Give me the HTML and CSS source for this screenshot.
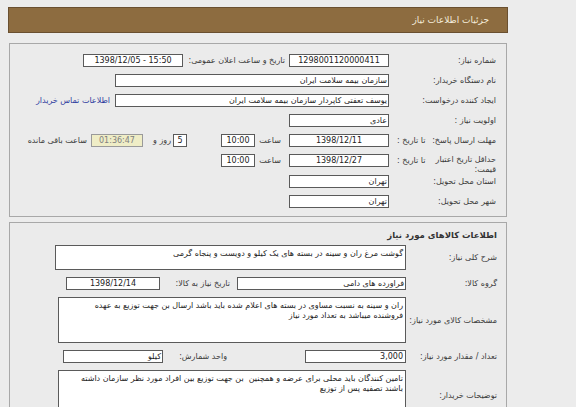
FILE: index.html
```html
<!DOCTYPE html>
<html lang="fa" dir="rtl">
<head>
<meta charset="utf-8">
<title>جزئیات اطلاعات نیاز</title>
<link rel="stylesheet" href="styles.css">
</head>
<body>
<div class="page">
  <div class="header"><span class="title">جزئیات اطلاعات نیاز</span></div>

  <div class="panel p1">
    <div class="row">
      <div class="lbl">شماره نیاز:</div>
      <div class="box w100 ctr" dir="ltr">1298001120000411</div>
      <div class="lbl2 w106">تاریخ و ساعت اعلان عمومی:</div>
      <div class="box w100 ctr" dir="ltr">1398/12/05 - 15:50</div>
    </div>
    <div class="row">
      <div class="lbl">نام دستگاه خریدار:</div>
      <div class="box w274">سازمان بیمه سلامت ایران</div>
    </div>
    <div class="row">
      <div class="lbl">ایجاد کننده درخواست:</div>
      <div class="box w274">یوسف تعفتی کاپردار سازمان بیمه سلامت ایران</div>
      <a class="link" href="#">اطلاعات تماس خریدار</a>
    </div>
    <div class="row">
      <div class="lbl">اولویت نیاز :</div>
      <div class="box w100">عادی</div>
    </div>
    <div class="row">
      <div class="lbl split"><span>مهلت ارسال پاسخ:</span><span>تا تاریخ :</span></div>
      <div class="box w100 ctr" dir="ltr">1398/12/11</div>
      <div class="lbl2 w34 pr8">ساعت</div>
      <div class="box w34 ctr" dir="ltr">10:00</div>
      <div class="gap34"></div>
      <div class="box w14 ctr" dir="ltr">5</div>
      <div class="lbl2 w30 pr2">روز و</div>
      <div class="box w52 ctr remain" dir="ltr">01:36:47</div>
      <div class="lbl2 pr4">ساعت باقی مانده</div>
    </div>
    <div class="row r6">
      <div class="lbl split"><span class="two">حداقل تاریخ اعتبار<br>قیمت:</span><span class="sub">تا تاریخ :</span></div>
      <div class="box w100 ctr" dir="ltr">1398/12/27</div>
      <div class="lbl2 w34 pr8">ساعت</div>
      <div class="box w34 ctr" dir="ltr">10:00</div>
    </div>
    <div class="row">
      <div class="lbl">استان محل تحویل:</div>
      <div class="box w100">تهران</div>
    </div>
    <div class="row">
      <div class="lbl">شهر محل تحویل:</div>
      <div class="box w100">تهران</div>
    </div>
  </div>

  <div class="panel p2">
    <div class="ptitle">اطلاعات کالاهای مورد نیاز</div>
    <div class="rows">
      <div class="row2">
        <div class="lbl l2">شرح کلی نیاز:</div>
        <div class="area w351 h25">گوشت مرغ ران و سینه در بسته های یک کیلو و دویست و پنجاه گرمی</div>
      </div>
      <div class="row2">
        <div class="lbl l2">گروه کالا:</div>
        <div class="box w169">فراورده های دامی</div>
        <div class="lbl2 w77 pr7">تاریخ نیاز به کالا:</div>
        <div class="box w94 ctr" dir="ltr">1398/12/14</div>
      </div>
      <div class="row2">
        <div class="lbl l2">مشخصات کالای مورد نیاز:</div>
        <div class="area w348 h46">ران و سینه به نسبت مساوی در بسته های اعلام شده باید باشد ارسال بن جهت توزیع به عهده<br>فروشنده میباشد به تعداد مورد نیاز</div>
      </div>
      <div class="row2">
        <div class="lbl l2">تعداد / مقدار مورد نیاز:</div>
        <div class="box w101 num" dir="ltr">3,000</div>
        <div class="lbl2 w142 pr78">واحد شمارش:</div>
        <div class="box w100">کیلو</div>
      </div>
      <div class="row2">
        <div class="lbl l2">توضیحات خریدار:</div>
        <div class="area w348 h50">تامین کنندگان باید محلی برای عرضه و همچنین&nbsp; بن جهت توزیع بین افراد مورد نظر سازمان داشته<br>باشند تصفیه پس از توزیع</div>
      </div>
    </div>
  </div>
</div>
</body>
</html>
```

FILE: styles.css
```css
html, body {
  margin: 0;
  padding: 0;
}
body {
  background: #ececec;
  font-family: "DejaVu Sans", sans-serif;
  font-size: 8px;
  color: #3a3a3a;
  direction: rtl;
  overflow: hidden;
}
.page {
  padding: 7px 68px 0 8px;
}
.header {
  height: 24px;
  background: #8d6c40;
  border: 1px solid #6a5030;
  display: flex;
  align-items: center;
  padding-right: 18px;
}
.title {
  color: #f4ecdc;
  font-size: 9px;
}
.panel {
  border: 1px solid #a8a8a8;
  background: #ebebeb;
  margin: 0 1px;
}
.p1 {
  margin-top: 10px;
  padding: 6px 10px 5px;
}
.p2 {
  margin-top: 5px;
  padding: 6px 9px 0;
}
.row {
  display: flex;
  align-items: center;
  height: 20px;
}
.r6 {
  height: 21px;
}
.lbl {
  width: 107px;
  flex: none;
  white-space: nowrap;
}
.lbl.split {
  display: flex;
  justify-content: space-between;
  align-items: center;
  padding-left: 8px;
  box-sizing: border-box;
}
.two {
  line-height: 10px;
  margin-top: 8px;
}
.sub {
  padding-left: 0;
}
.lbl2 {
  flex: none;
  white-space: nowrap;
  box-sizing: border-box;
}
.box {
  flex: none;
  box-sizing: border-box;
  height: 13px;
  border: 1px solid #5a5a5a;
  background: #fff;
  line-height: 11px;
  padding: 0 1px;
  white-space: nowrap;
  overflow: hidden;
  color: #222;
  text-align: right;
}
.box.ctr {
  text-align: center;
}
.box.num {
  text-align: right;
  padding-right: 2px;
}
.remain {
  background: #efedc6;
  color: #808080;
  border-color: #9a9a9a;
}
.w14 { width: 14px; }
.w30 { width: 30px; }
.w34 { width: 34px; }
.w52 { width: 52px; }
.w77 { width: 77px; }
.w94 { width: 94px; }
.w100 { width: 100px; }
.w101 { width: 101px; }
.w106 { width: 106px; }
.w142 { width: 142px; }
.w169 { width: 169px; }
.w274 { width: 274px; }
.w348 { width: 348px; }
.w351 { width: 351px; }
.pr2 { padding-right: 2px; }
.pr4 { padding-right: 4px; }
.pr7 { padding-right: 7px; }
.pr8 { padding-right: 8px; }
.pr78 { padding-right: 78px; }
.w106 { padding-right: 4px; }
.gap34 {
  width: 34px;
  flex: none;
}
.link {
  color: #2c3a9e;
  text-decoration: none;
  margin-right: 5px;
  white-space: nowrap;
}
.ptitle {
  font-weight: bold;
  font-size: 8.5px;
  color: #333;
  line-height: 12px;
  height: 12px;
}
.rows {
  display: flex;
  flex-direction: column;
  gap: 7px;
  margin-top: 4px;
}
.row2 {
  display: flex;
  align-items: center;
}
.l2 {
  width: 91px;
}
.area {
  flex: none;
  box-sizing: border-box;
  border: 1px solid #5a5a5a;
  background: #fff;
  color: #222;
  line-height: 10px;
  padding: 3px 2px 0;
  overflow: hidden;
  white-space: nowrap;
}
.h25 { height: 25px; }
.h46 { height: 46px; }
.h50 { height: 50px; }
```
